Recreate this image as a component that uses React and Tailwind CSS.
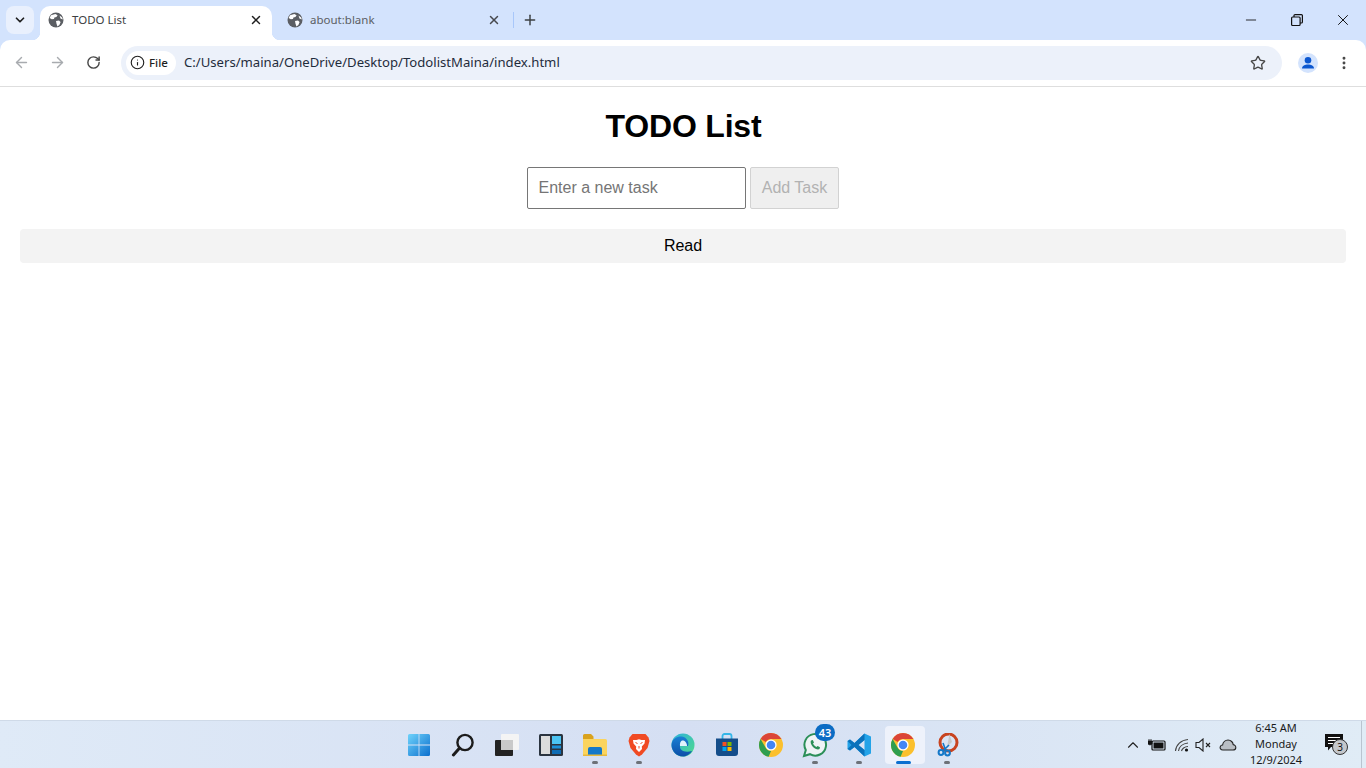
import React from "react";
import { ArrowLeft, ArrowRight, RotateCw, Star, X, Plus, Minus, ChevronDown, ChevronUp, EllipsisVertical, Info } from "lucide-react";

const Globe = () => (
  <svg width="16" height="16" viewBox="0 0 16 16" className="shrink-0">
    <circle cx="8" cy="8" r="7.5" fill="#5b5e63" />
    <path d="M3 3.2 L7.4 2 L9.6 3.2 L8.4 5 L6.4 5.4 L6 7 L3.8 7.2 L1.6 6 Z" fill="#fff" />
    <path d="M8 9 L11 8.4 L12.6 10 L11.4 13 L9.4 14.4 L8.6 12 Z" fill="#fff" />
    <path d="M11.5 3.5 L14.2 5.5 L14.8 7.5 L12.5 6.6 Z" fill="#fff" />
  </svg>
);

const WinLogo = () => (
  <svg width="24" height="24" viewBox="0 0 24 24">
    <defs>
      <linearGradient id="wl" x1="0" y1="0" x2="1" y2="1">
        <stop offset="0" stopColor="#6fd3fb" />
        <stop offset="1" stopColor="#0b6fce" />
      </linearGradient>
    </defs>
    <path d="M1 2.5a1.5 1.5 0 0 1 1.5-1.5H11.6V11.6H1Z M12.4 1H21.5A1.5 1.5 0 0 1 23 2.5V11.6H12.4Z M1 12.4H11.6V23H2.5A1.5 1.5 0 0 1 1 21.5Z M12.4 12.4H23V21.5A1.5 1.5 0 0 1 21.5 23H12.4Z" fill="url(#wl)" />
  </svg>
);

const SearchIcon = () => (
  <svg width="24" height="24" viewBox="0 0 24 24" fill="none">
    <circle cx="14" cy="9.5" r="7.6" stroke="#1c1c1c" strokeWidth="2.4" />
    <path d="M8.6 15 L2.4 22" stroke="#1c1c1c" strokeWidth="3" strokeLinecap="round" />
  </svg>
);

const TaskView = () => (
  <svg width="24" height="24" viewBox="0 0 24 24">
    <rect x="6" y="1" width="18" height="16" rx="1" fill="#f4f4f4" />
    <rect x="0" y="7" width="18" height="16" rx="1" fill="#232323" />
    <rect x="6" y="7" width="12" height="10" fill="#c9c9c9" />
  </svg>
);

const Widgets = () => (
  <svg width="24" height="24" viewBox="0 0 24 24">
    <rect x="0" y="1" width="24" height="22" rx="1.5" fill="#2b3440" />
    <rect x="2" y="3" width="9" height="18" fill="#dcdcdc" />
    <rect x="13" y="3" width="9" height="8" fill="#4cc4f2" />
    <rect x="13" y="12.5" width="9" height="3" fill="#1b8fd6" />
    <rect x="13" y="17" width="9" height="4" fill="#0f6cb4" />
  </svg>
);

const Folder = () => (
  <svg width="24" height="24" viewBox="0 0 24 24">
    <path d="M0 2.5A1.5 1.5 0 0 1 1.5 1H8l2.5 2.5V7H0Z" fill="#d9a21e" />
    <path d="M0 6H22.5A1.5 1.5 0 0 1 24 7.5V23H0Z" fill="#fbd45e" />
    <path d="M5 16a2 2 0 0 1 2-2H17a2 2 0 0 1 2 2V23H5Z" fill="#1478c8" />
    <rect x="0" y="21.5" width="24" height="1.5" fill="#e8b93c" />
  </svg>
);

const Brave = () => (
  <svg width="24" height="24" viewBox="0 0 24 24">
    <path d="M5.5 1H18.5L21.5 4.5L22.5 8L20.5 15L15 21.5L12 23.5L9 21.5L3.5 15L1.5 8L2.5 4.5Z" fill="#f04a23" />
    <path d="M6 7L9.5 7L12 6.2L14.5 7L18 7L17.5 10.5L14.8 13.5L15 16L12 19L9 16L9.2 13.5L6.5 10.5Z" fill="#fff" />
    <path d="M8.5 9.5L10.5 10.5M15.5 9.5L13.5 10.5M12 13V15.5" stroke="#f04a23" strokeWidth="1" />
  </svg>
);

const Edge = () => (
  <svg width="24" height="24" viewBox="0 0 24 24">
    <defs>
      <linearGradient id="eg1" x1="0" y1="0" x2="1" y2="1">
        <stop offset="0" stopColor="#2fb0dc" />
        <stop offset="1" stopColor="#4fdc8a" />
      </linearGradient>
      <linearGradient id="eg2" x1="0" y1="0" x2="0" y2="1">
        <stop offset="0" stopColor="#1a80d4" />
        <stop offset="1" stopColor="#0c4ea8" />
      </linearGradient>
    </defs>
    <circle cx="12" cy="12" r="11.5" fill="url(#eg1)" />
    <path d="M0.5 12C1 5 7 3 11 3.5C16 4.5 18.5 9 17 13H9C8.5 17 13 20 21 18C18.5 22 14.5 23.5 12 23.5C5.5 23.5 0.5 18 0.5 12Z" fill="url(#eg2)" />
    <path d="M9 13H16C16 9 13 7 11 7.5C9.5 8 8.6 10.5 9 13Z" fill="#dff3fb" />
  </svg>
);

const Store = () => (
  <svg width="24" height="24" viewBox="0 0 24 24">
    <path d="M7.5 6V3a2 2 0 0 1 2-2h5a2 2 0 0 1 2 2v3" stroke="#34b6e8" strokeWidth="1.8" fill="none" />
    <path d="M1 5.5H23V20a3 3 0 0 1-3 3H4a3 3 0 0 1-3-3Z" fill="#144d8a" />
    <rect x="7.5" y="9" width="4" height="4" fill="#f25022" />
    <rect x="12.5" y="9" width="4" height="4" fill="#7fba00" />
    <rect x="7.5" y="14" width="4" height="4" fill="#00a4ef" />
    <rect x="12.5" y="14" width="4" height="4" fill="#ffb900" />
  </svg>
);

const Chrome = () => (
  <svg width="24" height="24" viewBox="0 0 24 24">
    <circle cx="12" cy="12" r="12" fill="#fbc02d" />
    <path d="M12 0A12 12 0 0 1 22.4 6H12A6 6 0 0 0 6.8 9L1.6 6A12 12 0 0 1 12 0Z" fill="#db4437" />
    <path d="M1.6 6L6.8 15A6 6 0 0 0 12 18L9.6 23.76A12 12 0 0 1 1.6 6Z" fill="#2f9e4f" />
    <circle cx="12" cy="12" r="5.6" fill="#fff" />
    <circle cx="12" cy="12" r="4.3" fill="#4285f4" />
  </svg>
);

const WhatsApp = () => (
  <svg width="26" height="26" viewBox="0 0 26 26" fill="none">
    <path d="M2 24L3.8 18A10.8 10.8 0 1 1 8 22.2Z" stroke="#2b8f58" strokeWidth="2" fill="#eef3f6" />
    <path d="M9 8.5C8 10 9 13 11 15C13 17 16 18 17.5 17L18 15.2L15.6 14L14.4 15C13 14.4 11.6 13 11 11.6L12 10.4L10.8 8Z" fill="#2b8f58" />
  </svg>
);

const VSCode = () => (
  <svg width="24" height="24" viewBox="0 0 24 24">
    <path d="M17.5 0.5L24 3.5V20.5L17.5 23.5L7.5 14L3 17.5L0.5 16V8L3 6.5L7.5 10Z M17.5 7L11.5 12L17.5 17Z" fill="#23a3e8" fillRule="evenodd" />
    <path d="M17.5 0.5L7.5 10L3 6.5L0.5 8L4.5 12L0.5 16L3 17.5L7.5 14L17.5 23.5V17L11.5 12L17.5 7Z" fill="#0b72bb" />
  </svg>
);

const Snip = () => (
  <svg width="24" height="24" viewBox="0 0 24 24" fill="none">
    <circle cx="13.5" cy="9.5" r="8.5" stroke="#c8431f" strokeWidth="3" />
    <path d="M14.5 1L17 9L12 14Z" fill="#c9c9c9" />
    <path d="M8 10L11 18M14 12L8 18" stroke="#1478c8" strokeWidth="1.6" />
    <circle cx="6" cy="19.5" r="2.4" stroke="#1478c8" strokeWidth="2" />
    <circle cx="12.5" cy="20" r="2.4" stroke="#1478c8" strokeWidth="2" />
  </svg>
);

const TaskItem = ({ children, dot, active, badge }) => (
  <div className="relative w-[44px] h-[44px] flex items-center justify-center">
    {active && <span className="absolute left-[4px] top-[3px] w-[40px] h-[38px] rounded bg-[#eef2fb]" />}
    <span className="relative flex">{children}</span>
    {badge && (
      <span className="absolute top-[1px] left-[22px] w-[20px] h-[17px] rounded-full bg-[#0b6cc4] text-white text-[11px] font-semibold leading-[17px] text-center font-['Noto_Sans',sans-serif]">
        {badge}
      </span>
    )}
    {dot && <span className="absolute bottom-[3px] left-[19px] w-[6px] h-[3px] rounded-full bg-[#6d7178]" />}
    {active && <span className="absolute bottom-[3px] left-[15px] w-[15px] h-[3px] rounded-full bg-[#0b6fd0]" />}
  </div>
);

export default function App() {
  return (
    <div className="flex flex-col h-screen w-full overflow-hidden bg-white font-['Liberation_Sans',Arial,sans-serif]">
      {/* tab strip */}
      <div className="h-[40px] shrink-0 bg-[#d3e3fd] flex items-end pl-[6px] font-['Noto_Sans',sans-serif] text-[#3c4043]">
        <div className="self-start mt-[6px] w-[28px] h-[28px] rounded-lg bg-[#e9f0fd] flex items-center justify-center">
          <ChevronDown size={14} strokeWidth={3} color="#1f1f1f" />
        </div>
        <div className="relative ml-[6px] w-[232px] h-[34px] bg-white rounded-t-[10px] flex items-center pl-[8px] pr-[9px] pb-[6px]">
          <span className="absolute bottom-0 -left-[8px] w-[8px] h-[8px] bg-[radial-gradient(circle_at_0_0,transparent_8px,white_8.5px)]" />
          <span className="absolute bottom-0 -right-[8px] w-[8px] h-[8px] bg-[radial-gradient(circle_at_100%_0,transparent_8px,white_8.5px)]" />
          <Globe />
          <span className="ml-[8px] text-[11.5px] flex-1 text-[#3c4043]">TODO List</span>
          <X size={14} strokeWidth={2.5} color="#1f1f1f" />
        </div>
        <div className="w-[232px] h-[34px] flex items-center pl-[15px] pr-[3px] pb-[6px]">
          <Globe />
          <span className="ml-[7px] text-[11.5px] flex-1 text-[#5b5e63]">about:blank</span>
          <X size={14} strokeWidth={2.5} color="#47494d" />
        </div>
        <div className="self-center ml-[9px] w-[1px] h-[16px] bg-[#a8c7fa]" />
        <Plus size={16} strokeWidth={2.2} color="#3c4043" className="self-center ml-[8px]" />
        <div className="flex-1" />
        <div className="self-center flex items-center mr-[14px]">
          <Minus size={16} strokeWidth={1.3} color="#111" />
          <svg width="16" height="16" viewBox="0 0 16 16" fill="none" stroke="#111" strokeWidth="1.2" className="ml-[30px]">
            <rect x="2.6" y="5" width="8.5" height="8.5" rx="1" />
            <path d="M5 5V3.6a1 1 0 0 1 1-1h6.4a1 1 0 0 1 1 1V10a1 1 0 0 1-1 1H11" />
          </svg>
          <X size={18} strokeWidth={1.3} color="#111" className="ml-[29px]" />
        </div>
      </div>
      {/* toolbar */}
      <div className="h-[47px] shrink-0 bg-[#d3e3fd]">
        <div className="h-full bg-white rounded-t-[10px] border-b border-[#dedede] flex items-center pb-[1px] text-[#474747] font-['Noto_Sans',sans-serif]">
          <ArrowLeft size={17} strokeWidth={2} color="#a8abaf" className="ml-[13px]" />
          <ArrowRight size={17} strokeWidth={2} color="#a8abaf" className="ml-[19px]" />
          <RotateCw size={15} strokeWidth={2.3} color="#474747" className="ml-[20px]" />
          <div className="ml-[20px] w-[1161px] h-[34px] bg-[#ecf1fa] rounded-full flex items-center pl-[5px] pr-[16px]">
            <div className="h-[24px] w-[50px] bg-white rounded-full flex items-center pl-[4px]">
              <Info size={15} strokeWidth={1.8} color="#1f1f1f" />
              <span className="ml-[4px] text-[11.5px] font-medium text-[#1f1f1f]">File</span>
            </div>
            <span className="ml-[8px] mt-[1px] text-[13.14px] flex-1 text-[#1f2c3c]">C:/Users/maina/OneDrive/Desktop/TodolistMaina/index.html</span>
            <Star size={16} strokeWidth={2} color="#474747" />
          </div>
          <div className="ml-[16px] w-[20px] h-[20px] rounded-full bg-[#d3e3fd] overflow-hidden flex items-center justify-center">
            <svg width="20" height="20" viewBox="0 0 20 20" fill="#0b57d0">
              <circle cx="10" cy="7.2" r="3.3" />
              <path d="M4 15.5C4 12.8 7 11.6 10 11.6C13 11.6 16 12.8 16 15.5Z" />
            </svg>
          </div>
          <EllipsisVertical size={16} strokeWidth={2.4} color="#474747" className="ml-[18px]" />
        </div>
      </div>
      {/* page */}
      <main className="flex-1 min-h-0 px-[20px] flex flex-col items-stretch">
        <h1 className="mt-[21px] pl-[1px] text-[32px] leading-[37px] font-bold tracking-[-0.2px] text-black text-center">TODO List</h1>
        <div className="mt-[22px] flex justify-center gap-[4px] pr-[1px]">
          <input
            placeholder="Enter a new task"
            className="w-[219px] h-[42px] px-[11px] text-[16px] border border-[#767676] rounded-[2px] bg-white placeholder:text-[#757575] outline-none"
          />
          <button disabled className="w-[89px] h-[42px] pl-[1px] text-[16px] border border-[#d2d2d2] rounded-[2px] bg-[#efefef] text-[#b2b2b2]">
            Add Task
          </button>
        </div>
        <div className="mt-[20px] h-[34px] bg-[#f3f3f3] rounded-[4px] flex items-center justify-center text-[16px] text-black">Read</div>
      </main>
      {/* taskbar */}
      <div className="relative h-[48px] shrink-0 border-t border-[#cfdae8] bg-gradient-to-r from-[#dfeaf7] via-[#d5dff3] to-[#e0ecf6] flex items-center justify-center">
        <div className="flex items-center">
          <TaskItem><WinLogo /></TaskItem>
          <TaskItem><SearchIcon /></TaskItem>
          <TaskItem><TaskView /></TaskItem>
          <TaskItem><Widgets /></TaskItem>
          <TaskItem dot><Folder /></TaskItem>
          <TaskItem dot><Brave /></TaskItem>
          <TaskItem><Edge /></TaskItem>
          <TaskItem><Store /></TaskItem>
          <TaskItem><Chrome /></TaskItem>
          <TaskItem dot badge="43"><WhatsApp /></TaskItem>
          <TaskItem dot><VSCode /></TaskItem>
          <TaskItem active><Chrome /></TaskItem>
          <TaskItem dot><Snip /></TaskItem>
        </div>
        <div className="absolute right-0 top-0 bottom-0 flex items-center text-[#1a1a1a] font-['Noto_Sans',sans-serif]">
          <ChevronUp size={18} strokeWidth={1.5} color="#222" />
          <svg width="18" height="14" viewBox="0 0 18 14" className="ml-[6px]">
            <rect x="4" y="3" width="13" height="9" rx="1" fill="none" stroke="#111" strokeWidth="1.2" />
            <rect x="5.5" y="4.5" width="10" height="6" fill="#111" />
            <path d="M1 3V1M3 3V1M0 3H4V6L2 7L0 6Z" stroke="#111" strokeWidth="0.8" fill="#111" />
          </svg>
          <svg width="16" height="16" viewBox="0 0 16 16" fill="none" className="ml-[8px]">
            <path d="M1.5 14C2 8 7 3 14 2.5M4.5 14C5 10 8.5 6.5 14 6M7.5 14C8 12 10.5 9.5 14 9.5" stroke="#444" strokeWidth="1.1" />
            <circle cx="12.5" cy="13" r="1.6" fill="#111" />
          </svg>
          <svg width="18" height="14" viewBox="0 0 18 14" fill="none" className="ml-[5px]" stroke="#222" strokeWidth="1.1">
            <path d="M1 4.5H4L8 1V13L4 9.5H1Z" />
            <path d="M11 5L15 9M15 5L11 9" />
          </svg>
          <svg width="18" height="12" viewBox="0 0 18 12" className="ml-[6px]">
            <path d="M4 11C1.5 11 0.8 9 1.2 7.8C1.6 6.5 3 6 3.6 6C4 3 6.5 1 9 1C12 1 14 3.5 14.2 5.6C16 5.8 17 7.4 16.8 8.8C16.6 10.2 15.4 11 14 11Z" fill="#b9bec4" stroke="#222" strokeWidth="1.1" />
          </svg>
          <div className="ml-[6px] -mt-[2px] w-[66px] text-center text-[11px] leading-[16px]">
            <div>6:45 AM</div>
            <div>Monday</div>
            <div>12/9/2024</div>
          </div>
          <div className="relative ml-[16px] mr-[23px] w-[18px] h-[22px]">
            <svg width="18" height="17" viewBox="0 0 18 17">
              <path d="M0 0H18V13H6L3 16.5V13H0Z" fill="#111" />
              <path d="M3 3.5H15M3 6.5H15M3 9.5H11" stroke="#fff" strokeWidth="1" />
            </svg>
            <span className="absolute left-[7px] top-[5px] w-[16px] h-[16px] rounded-full bg-[#c4c7cb] border border-[#333] text-[10px] leading-[14px] text-center text-[#111]">3</span>
          </div>
          <div className="w-[1px] h-[48px] bg-[#b9c4d0] absolute right-[4px] top-0" />
        </div>
      </div>
    </div>
  );
}
